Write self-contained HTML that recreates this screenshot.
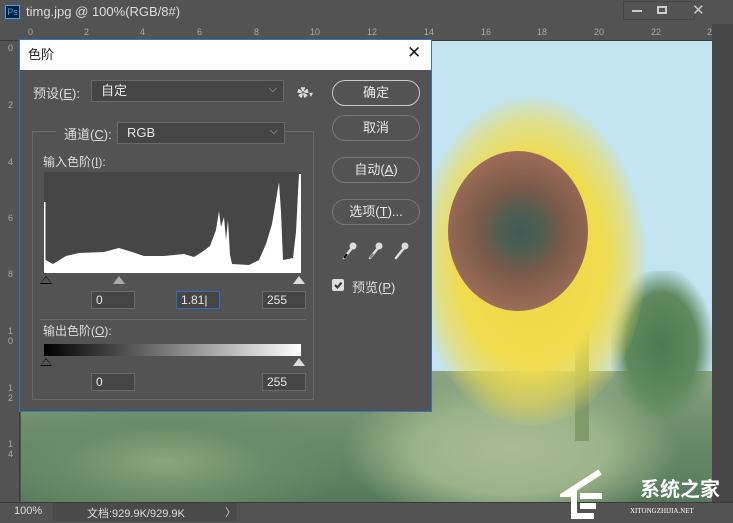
<!DOCTYPE html>
<html style="width:733px;height:523px;overflow:hidden"><head><meta charset="utf-8"><style>
*{margin:0;padding:0;box-sizing:border-box}
body{width:733px;height:523px;overflow:hidden;background:#535353;font-family:"Liberation Sans","Noto Sans CJK SC",sans-serif;font-size:12px;color:#ddd;position:relative}
.abs{position:absolute}
.btn{position:absolute;left:332px;width:88px;height:26px;border:1px solid #9a9a9a;border-radius:13px;text-align:center;line-height:24px;font-size:13px;color:#e8e8e8}
.inp{position:absolute;height:18px;background:#454545;border:1px solid #6a6a6a;color:#e8e8e8;font-size:12px;line-height:16px;padding-left:4px}
.sel{position:absolute;height:22px;background:#454545;border:1px solid #6a6a6a;color:#e8e8e8;font-size:13px;line-height:20px;padding-left:9px}
.sel:after{content:"⌵";position:absolute;right:6px;top:-2px;font-size:11px;color:#bbb}
.tri{position:absolute;width:0;height:0;border-left:6px solid transparent;border-right:6px solid transparent;border-bottom:8px solid #000}
</style></head><body>
<div class="abs" style="left:0;top:0;width:733px;height:24px;background:#535353"></div>
<div class="abs" style="left:5px;top:5px;width:15px;height:14px;border:1px solid #31a8ff;background:#001e36;color:#31a8ff;font-size:9px;line-height:12px;text-align:center">Ps</div>
<div class="abs" style="left:26px;top:4px;font-size:13px;color:#ddd">timg.jpg @ 100%(RGB/8#)</div>
<div class="abs" style="left:623px;top:1px;width:72px;height:19px;border:1px solid #454545"></div>
<div class="abs" style="left:632px;top:10px;width:10px;height:2px;background:#ccc"></div>
<div class="abs" style="left:657px;top:6px;width:10px;height:8px;border:2px solid #ccc"></div>
<div class="abs" style="left:692px;top:1px;font-size:15px;color:#ccc">✕</div>
<div class="abs" style="left:0;top:24px;width:712px;height:17px;background:#535353;border-bottom:1px solid #3a3a3a;font-size:9px;color:#aaa">
<span class="abs" style="left:28px;top:3px">0</span><span class="abs" style="left:84px;top:3px">2</span><span class="abs" style="left:140px;top:3px">4</span><span class="abs" style="left:197px;top:3px">6</span><span class="abs" style="left:254px;top:3px">8</span><span class="abs" style="left:310px;top:3px">10</span><span class="abs" style="left:367px;top:3px">12</span><span class="abs" style="left:424px;top:3px">14</span><span class="abs" style="left:481px;top:3px">16</span><span class="abs" style="left:537px;top:3px">18</span><span class="abs" style="left:594px;top:3px">20</span><span class="abs" style="left:651px;top:3px">22</span><span class="abs" style="left:707px;top:3px">2</span></div>
<div class="abs" style="left:0;top:41px;width:20px;height:460px;background:#535353;border-right:1px solid #3a3a3a;font-size:9px;color:#aaa">
<span class="abs" style="left:8px;top:2px">0</span><span class="abs" style="left:8px;top:59px">2</span><span class="abs" style="left:8px;top:116px">4</span><span class="abs" style="left:8px;top:172px">6</span><span class="abs" style="left:8px;top:228px">8</span><span class="abs" style="left:8px;top:285px;line-height:10px">1<br>0</span><span class="abs" style="left:8px;top:342px;line-height:10px">1<br>2</span><span class="abs" style="left:8px;top:398px;line-height:10px">1<br>4</span></div>
<div class="abs" style="left:712px;top:24px;width:21px;height:478px;background:#474747"></div>
<div class="abs" style="left:21px;top:41px;width:691px;height:461px;overflow:hidden;background:#c2e4f1">
<div class="abs" style="left:0;top:330px;width:691px;height:131px;background:linear-gradient(180deg,#8da684,#6f8f6c 40%,#557a5c 100%)"></div>
<div class="abs" style="left:590px;top:230px;width:101px;height:150px;border-radius:40%;background:radial-gradient(ellipse,#4c7a52 0,#5f8a5e 50%,rgba(95,138,94,0) 75%)"></div>
<div class="abs" style="left:320px;top:330px;width:340px;height:131px;background:radial-gradient(ellipse at 50% 60%,#a8bc92 0,#9cb38a 40%,rgba(150,175,130,0) 70%)"></div>
<div class="abs" style="left:0;top:360px;width:320px;height:101px;background:radial-gradient(ellipse at 45% 60%,#8aa67e 0,#6a8c68 40%,rgba(77,111,82,0) 75%)"></div>
<div class="abs" style="left:554px;top:290px;width:14px;height:110px;background:#809a6c"></div>
<div class="abs" style="left:395px;top:55px;width:230px;height:330px;border-radius:50%;background:radial-gradient(ellipse,#eed84a 0,#f0dc4e 45%,rgba(240,220,80,0.6) 60%,rgba(240,220,80,0) 72%)"></div>
<div class="abs" style="left:427px;top:110px;width:140px;height:160px;border-radius:50%;background:radial-gradient(circle at 52% 50%,#3e5c5a 0,#4e5e50 18%,#7a5a4a 40%,#9a6a56 70%,#a78062 100%)"></div>
</div>
<div class="abs" style="left:0;top:502px;width:733px;height:21px;background:#535353;border-top:1px solid #3a3a3a"></div>
<div class="abs" style="left:14px;top:505px;font-size:11px;color:#ddd">100%</div>
<div class="abs" style="left:53px;top:503px;width:184px;height:18px;background:#4a4a4a"></div>
<div class="abs" style="left:87px;top:505px;font-size:11px;color:#ddd">文档:929.9K/929.9K</div>
<div class="abs" style="left:225px;top:504px;font-size:11px;color:#ccc">〉</div>
<svg class="abs" style="left:560px;top:468px" width="80" height="52" viewBox="0 0 80 52"><path d="M40,4 L6,26 L14,26 L14,48 L34,48 M20,28 L42,28 M20,38 L36,38" stroke="#fff" stroke-width="6" fill="none"/></svg>
<div class="abs" style="left:640px;top:478px;font-size:20px;line-height:24px;font-weight:bold;color:#fff">系统之家</div>
<div class="abs" style="left:630px;top:507px;font-size:7px;line-height:9px;color:#fff;font-family:'Liberation Serif',serif">XITONGZHIJIA.NET</div>
<div class="abs" style="left:19px;top:39px;width:413px;height:373px;background:#535353;border:1px solid #2e78c0"></div>
<div class="abs" style="left:20px;top:40px;width:411px;height:30px;background:#fff;color:#222;font-size:13px;line-height:30px;padding-left:8px">色阶</div>
<div class="abs" style="left:407px;top:43px;font-size:17px;color:#222">✕</div>
<div class="abs" style="left:33px;top:83px;font-size:13px">预设(<u>E</u>):</div>
<div class="sel" style="left:91px;top:80px;width:193px">自定</div>
<div class="abs" style="left:297px;top:84px;font-size:12px;color:#ddd">✿<span style="font-size:8px">▾</span></div>
<div class="abs" style="left:32px;top:131px;width:282px;height:269px;border:1px solid #6a6a6a"></div>
<div class="abs" style="left:56px;top:124px;width:60px;height:14px;background:#535353"></div>
<div class="abs" style="left:64px;top:124px;font-size:13px">通道(<u>C</u>):</div>
<div class="sel" style="left:117px;top:122px;width:168px">RGB</div>
<div class="abs" style="left:43px;top:153px;font-size:12px">输入色阶(<u>I</u>):</div>
<div class="abs" style="left:44px;top:172px;width:257px;height:101px;background:#464646">
<svg width="257" height="101" viewBox="0 0 257 101" style="position:absolute;left:0;top:0"><polygon fill="#fff" points="0,101 0,30 1.5,30 1.5,88 9,92 22,84 35,81 60,80 75,76 85,79 100,84 120,84 140,82 150,85 158,80 166,74 172,58 175,39 177,55 180,45 182,68 184,48 186,83 188,92 205,93 215,88 222,72 228,52 232,28 235,10 237,40 239,88 249,86 252,60 254,20 255,2 257,2 257,101"/></svg></div>
<div class="tri" style="left:40px;top:276px"></div><div class="tri" style="left:41px;top:277px;border-left-width:5px;border-right-width:5px;border-bottom:6px solid #535353"></div>
<div class="tri" style="left:113px;top:276px;border-bottom-color:#aaa"></div>
<div class="tri" style="left:293px;top:276px;border-bottom-color:#ddd"></div>
<div class="inp" style="left:91px;top:291px;width:44px">0</div>
<div class="inp" style="left:176px;top:291px;width:44px;border-color:#2e6fc0">1.81|</div>
<div class="inp" style="left:262px;top:291px;width:44px">255</div>
<div class="abs" style="left:40px;top:319px;width:266px;height:1px;background:#6a6a6a"></div>
<div class="abs" style="left:43px;top:322px;font-size:12px">输出色阶(<u>O</u>):</div>
<div class="abs" style="left:44px;top:344px;width:257px;height:12px;background:linear-gradient(90deg,#000,#fff)"></div>
<div class="tri" style="left:40px;top:358px"></div><div class="tri" style="left:41px;top:359px;border-left-width:5px;border-right-width:5px;border-bottom:6px solid #535353"></div>
<div class="tri" style="left:293px;top:358px;border-bottom-color:#ddd"></div>
<div class="inp" style="left:91px;top:373px;width:44px">0</div>
<div class="inp" style="left:262px;top:373px;width:44px">255</div>
<div class="btn" style="top:80px;border-color:#c8c8c8">确定</div>
<div class="btn" style="top:115px;border-color:#777">取消</div>
<div class="btn" style="top:157px;border-color:#777">自动(<u>A</u>)</div>
<div class="btn" style="top:199px;border-color:#777">选项(<u>T</u>)...</div>
<svg class="abs" style="left:340px;top:240px" width="75" height="22" viewBox="0 0 75 22">
<g stroke="#ddd" stroke-width="2.5" stroke-linecap="round"><path d="M4,18 L12,8"/><path d="M30,18 L38,8"/><path d="M56,18 L64,8"/></g>
<g fill="#ddd"><circle cx="13" cy="6" r="3.5"/><circle cx="39" cy="6" r="3.5"/><circle cx="65" cy="6" r="3.5"/></g>
<path d="M4,18 L7,14" stroke="#000" stroke-width="2"/><path d="M30,18 L33,14" stroke="#888" stroke-width="2"/></svg>
<div class="abs" style="left:332px;top:279px;width:12px;height:12px;background:#ddd;border-radius:2px"></div>
<svg class="abs" style="left:332px;top:279px" width="12" height="12"><path d="M3,6 L5.5,8.5 L9.5,3.5" stroke="#333" stroke-width="2" fill="none"/></svg>
<div class="abs" style="left:352px;top:277px;font-size:13px">预览(<u>P</u>)</div>
</body></html>
